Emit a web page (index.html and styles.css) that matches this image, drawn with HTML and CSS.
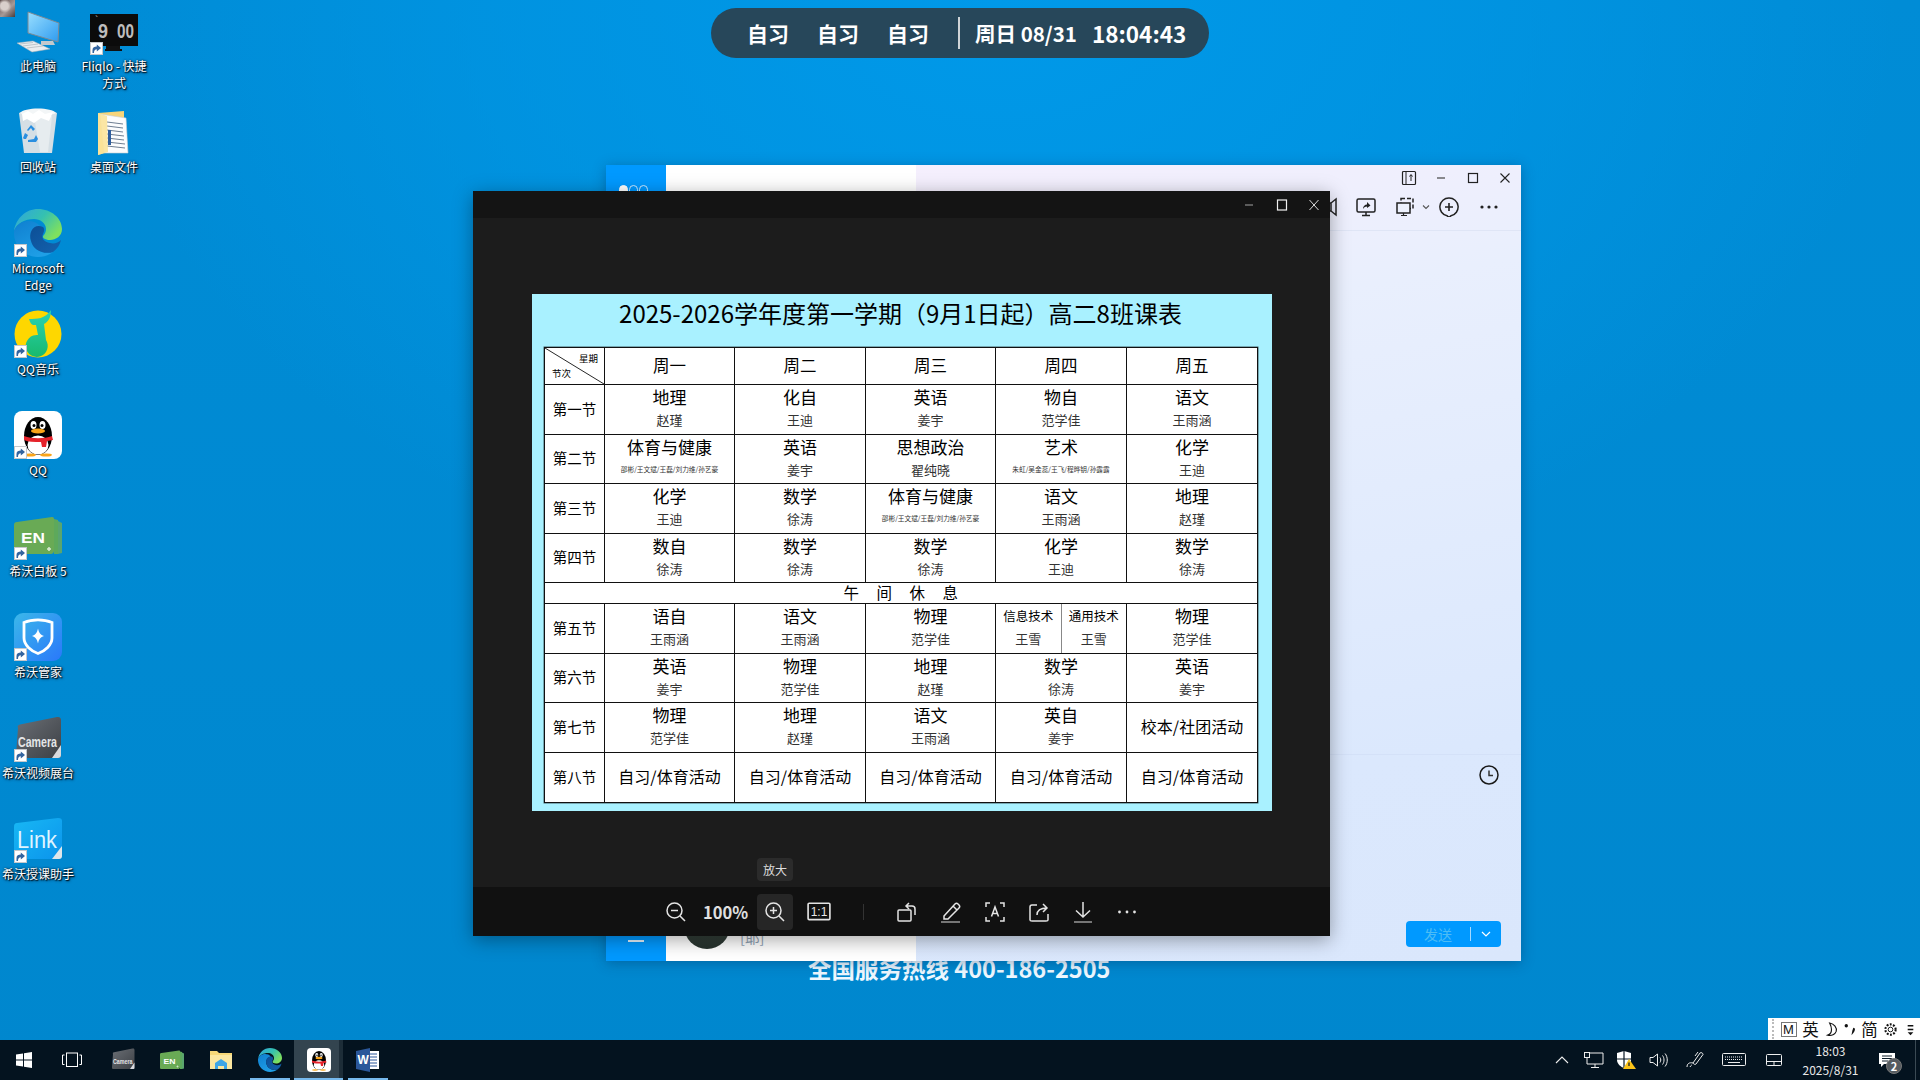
FILE: index.html
```html
<!DOCTYPE html>
<html lang="zh-CN">
<head>
<meta charset="utf-8">
<title>课表</title>
<link rel="stylesheet" href="styles.css">
</head>
<body>
<svg class="sprite" aria-hidden="true">
  <defs>
    <linearGradient id="gEdgeTop" x1="0" y1="0" x2="1" y2="0.6"><stop offset="0" stop-color="#2fa4e0"/><stop offset=".55" stop-color="#35c1b0"/><stop offset="1" stop-color="#7fe05e"/></linearGradient>
    <linearGradient id="gEdgeLow" x1="0" y1="0" x2="0.6" y2="1"><stop offset="0" stop-color="#0f7fd0"/><stop offset="1" stop-color="#1f9fe6"/></linearGradient>
    <linearGradient id="gEdgeWave" x1="0" y1="0" x2="1" y2="1"><stop offset="0" stop-color="#0c4f96"/><stop offset="1" stop-color="#1462ae"/></linearGradient>
    <linearGradient id="gNote" x1="0" y1="0" x2="0" y2="1"><stop offset="0" stop-color="#2ad3b4"/><stop offset="1" stop-color="#18b96e"/></linearGradient>
    <linearGradient id="gShield" x1="0" y1="0" x2="1" y2="1"><stop offset="0" stop-color="#3bb8ea"/><stop offset="1" stop-color="#2a78fa"/></linearGradient>
    <linearGradient id="gCam" x1="0" y1="0" x2="1" y2="1"><stop offset="0" stop-color="#6b6f75"/><stop offset="1" stop-color="#3c4045"/></linearGradient>
    <linearGradient id="gLink" x1="0" y1="0" x2="1" y2="1"><stop offset="0" stop-color="#18b8f4"/><stop offset="1" stop-color="#0b94ec"/></linearGradient>
    <linearGradient id="gScreen" x1="0" y1="0" x2="1" y2="1"><stop offset="0" stop-color="#9adfff"/><stop offset="1" stop-color="#2e9bf0"/></linearGradient>
  </defs>
  <symbol id="sc" viewBox="0 0 13 13"><rect width="13" height="13" fill="#c4c7cb"/><rect x="1" y="1" width="11" height="11" fill="#fff"/><path d="M2.500 11V8C2.500 5.600 4.500 4.600 6.800 4.600V2.500L11 6 6.800 9.500V7.300C5 7.300 4 8.400 4 11Z" fill="#33649f"/></symbol>
  <symbol id="edge" viewBox="0 0 48 48">
    <path d="M0 22C2 9 12 0 24 0c13 0 24 9 24 20 0 7-6 11-12 11-4 0-7-2-7-3 0-2 3-3 3-8 0-6-6-10-12-10C11 10 3 14 0 22Z" fill="url(#gEdgeTop)"/>
    <path d="M0 22C-1 36 10 48 24 48c6 0 11-2 15-5-9 3-20-2-22-11-2-8 3-14 9-15-8-9-23-5-26 5Z" fill="url(#gEdgeLow)"/>
    <path d="M17 32c2 9 13 14 22 11 4-3 7-7 8-12-3 3-7 4-11 3-6-1-9-5-7-9 1-2 2-5 0-7-9-4-15 5-12 14Z" fill="url(#gEdgeWave)"/>
  </symbol>
  <symbol id="qq" viewBox="0 0 48 48">
    <rect width="48" height="48" rx="8" fill="#fff"/>
    <ellipse cx="24" cy="25" rx="14" ry="19" fill="#000"/>
    <ellipse cx="24" cy="34" rx="10.500" ry="9.500" fill="#fff"/>
    <ellipse cx="19.500" cy="14" rx="3" ry="4" fill="#fff"/><ellipse cx="28.500" cy="14" rx="3" ry="4" fill="#fff"/>
    <circle cx="20" cy="14.500" r="1.500" fill="#000"/><circle cx="28" cy="14.500" r="1.500" fill="#000"/>
    <ellipse cx="24" cy="20" rx="7" ry="2.400" fill="#f9a51a"/>
    <path d="M10 25C18 28 30 28 38 25L39 29 33 30 32 36H28L27 31C20 31 14 31 10 29Z" fill="#e5232b"/>
    <ellipse cx="16" cy="44" rx="6" ry="1.600" fill="#f9a51a"/><ellipse cx="32" cy="44" rx="6" ry="1.600" fill="#f9a51a"/>
  </symbol>
  <symbol id="camera" viewBox="0 0 48 48">
    <path d="M4 12C3 10 4 9 6 8.500L43 1c3-.5 4 1 4 3v35c0 2-1 3-3 3H5c-2 0-3-1-3-3Z" fill="url(#gCam)"/>
    <path d="M38 42l9-13v10c0 2-1 3-3 3Z" fill="#d8dade"/>
  </symbol>
  <symbol id="en" viewBox="0 0 48 48">
    <path d="M44 5 48 7V37L44 38Z" fill="#5aa56e"/><path d="M40 3 44 4V38L40 38Z" fill="#5da95b"/>
    <path d="M0 9C0 7 1 6 3 6L38 1C40 1 40 2 40 4V34C40 37 39 38 36 38H3C1 38 0 37 0 35Z" fill="#69aa55"/>
    <path d="M33 33h4M35 31v4" stroke="#d9ecd2" stroke-width="1.500"/>
  </symbol>
</svg>

<div class="desktop">
  <div class="wallpaper-line">全国服务热线 400-186-2505</div>
  <div class="avatar-corner"></div>

  <div class="icons">
    <div class="dicon"><div class="dimg">
      <svg viewBox="0 0 48 48"><path d="M14 5 45 16 44 35 14 26Z" fill="url(#gScreen)" stroke="#7d8a94" stroke-width="1"/><path d="M27 34h12l2 4-14 0Z" fill="#c3c9cd"/><path d="M3 36 19 34 36 42 18 45Z" fill="#e9edf0" stroke="#aab1b6" stroke-width=".5"/><path d="M6 37 19 35.500M9 39 24 37M13 41 29 39" stroke="#b4bbc0" stroke-width=".8"/></svg>
    </div><span class="dlabel">此电脑</span></div>
    <div class="dicon"><div class="dimg">
      <svg viewBox="0 0 48 48"><path d="M5 5C10 2 38 2 43 5L38 45H10Z" fill="#d5dfe5"/><path d="M20 8 38 8 34 44H26Z" fill="#e6ecef"/><path d="M6 5C12 9 36 9 42 5 38 -1 10 -1 6 5Z" fill="#f3f6f7"/><path d="M8 6l6-3 5 3 6-4 6 4 8-2-4 9-8-3-7 5-7-4-4 2Z" fill="#fff"/><path d="M13 22l4-5 4 4-2 2-2-3-3 3ZM9 30l2-5 3 2-2 4h-2ZM20 34h-6v-2l6-1 2-4 2 4-2 3Z" fill="#2a8fe0"/></svg>
    </div><span class="dlabel">回收站</span></div>
    <div class="dicon"><div class="dimg">
      <svg viewBox="0 0 48 48"><use href="#edge"/></svg>
      <svg class="sc"><use href="#sc"/></svg>
    </div><span class="dlabel">Microsoft<br>Edge</span></div>
    <div class="dicon"><div class="dimg">
      <svg viewBox="0 0 48 48"><circle cx="24" cy="24" r="23.500" fill="#fed700"/><path d="M15 9C23 9 31 9 37 0 37 8 34 12 30 14L32 30A11 11 0 1 1 24 25L22 15C18 15 17 15 15 9Z" fill="url(#gNote)"/></svg>
      <svg class="sc"><use href="#sc"/></svg>
    </div><span class="dlabel">QQ音乐</span></div>
    <div class="dicon"><div class="dimg">
      <svg viewBox="0 0 48 48"><use href="#qq"/></svg>
      <svg class="sc"><use href="#sc"/></svg>
    </div><span class="dlabel">QQ</span></div>
    <div class="dicon"><div class="dimg">
      <svg viewBox="0 0 48 48"><use href="#en" y="4"/><text x="7" y="31" class="svg-en" textLength="24" lengthAdjust="spacingAndGlyphs">EN</text></svg>
      <svg class="sc"><use href="#sc"/></svg>
    </div><span class="dlabel">希沃白板 5</span></div>
    <div class="dicon"><div class="dimg">
      <svg viewBox="0 0 48 48"><rect width="48" height="48" rx="9" fill="url(#gShield)"/><path d="M10 9.500C18 6 30 6 38 9.500V25C38 32 31 38 24 40.500 17 38 10 32 10 25Z" fill="none" stroke="#fff" stroke-width="2.800"/><path d="M24 15.500C25 20 26.500 22 30 23 26.500 24 25 26 24 30.500 23 26 21.500 24 18 23 21.500 22 23 20 24 15.500Z" fill="#fff"/></svg>
      <svg class="sc"><use href="#sc"/></svg>
    </div><span class="dlabel">希沃管家</span></div>
    <div class="dicon"><div class="dimg">
      <svg viewBox="0 0 48 48"><use href="#camera" y="2"/><text x="4" y="33" class="svg-cam" textLength="39" lengthAdjust="spacingAndGlyphs">Camera</text></svg>
      <svg class="sc"><use href="#sc"/></svg>
    </div><span class="dlabel">希沃视频展台</span></div>
    <div class="dicon"><div class="dimg">
      <svg viewBox="0 0 48 48"><g transform="translate(0 2)"><path d="M0 10C0 7 1 6 3 6L44 1C47 1 48 2 48 4V36C48 40 47 42 44 42H3C1 42 0 41 0 39Z" fill="url(#gLink)"/><path d="M38 42l10-13v10c0 2-1 3-3 3Z" fill="#dfe6ea"/></g><text x="3" y="33" class="svg-link" textLength="40" lengthAdjust="spacingAndGlyphs">Link</text></svg>
      <svg class="sc"><use href="#sc"/></svg>
    </div><span class="dlabel">希沃授课助手</span></div>
    <div class="dicon"><div class="dimg">
      <svg viewBox="0 0 48 48"><rect y="7" width="48" height="32" fill="#0b0b0b"/><path d="M16 39h14v3H16ZM15 42h17v2H15Z" fill="#111"/><text x="5" y="17" class="svg-tick">`</text><text x="8" y="31" class="svg-flip" textLength="10" lengthAdjust="spacingAndGlyphs">9</text><text x="27" y="31" class="svg-flip" textLength="17" lengthAdjust="spacingAndGlyphs">00</text></svg>
      <svg class="sc"><use href="#sc"/></svg>
    </div><span class="dlabel">Fliqlo - 快捷<br>方式</span></div>
    <div class="dicon"><div class="dimg">
      <svg viewBox="0 0 48 48"><path d="M8 5 34 3 34 39 8 47Z" fill="#f7d57a"/><path d="M10 6 36 10 38 45 14 45Z" fill="#fbfcfd" stroke="#c8ccd0" stroke-width=".6"/><path d="M17 14 33 16M17 18 33 20M17 22 33 24M17 26 34 28M17 30 34 32M17 34 35 36M17 38 35 40" stroke="#6f7f92" stroke-width="1"/><path d="M8 5 17 8 18 44 8 47Z" fill="#fbe39a" opacity=".9"/><rect x="18" y="22" width="3" height="15" fill="#2d5d9e"/></svg>
    </div><span class="dlabel">桌面文件</span></div>
  </div>

  <div class="pill">
    <span class="pill-sub">自习</span><span class="pill-sub">自习</span><span class="pill-sub">自习</span>
    <span class="pill-div"></span>
    <span class="pill-date">周日 08/31</span>
    <span class="pill-time">18:04:43</span>
  </div>

  <section class="qq">
    <aside class="qq-side">
      <div class="qq-dots"><i class="dot-on"></i><i></i><i></i></div>
      <div class="qq-dash"></div>
    </aside>
    <div class="qq-list">
      <div class="qq-contact"><span class="qq-avatar"></span><span class="qq-tag">[耶]</span></div>
    </div>
    <main class="qq-main">
      <div class="qq-head">
        <div class="qq-ctrl">
          <svg class="ic16" viewBox="0 0 16 16"><rect x="1.500" y="1.500" width="13" height="13" rx="1" fill="none" stroke="#222" stroke-width="1.200"/><path d="M5 1.500V14.500" stroke="#222"/><path d="M10 11V5M8.500 6.500 10 4.500 11.500 6.500" fill="none" stroke="#222"/></svg>
          <svg class="ic16" viewBox="0 0 16 16"><path d="M4 8h8" stroke="#444" stroke-width="1.200"/></svg>
          <svg class="ic16" viewBox="0 0 16 16"><rect x="3.500" y="3.500" width="9" height="9" fill="none" stroke="#222" stroke-width="1.200"/></svg>
          <svg class="ic16" viewBox="0 0 16 16"><path d="M3.500 3.500 12.500 12.500M12.500 3.500 3.500 12.500" stroke="#222" stroke-width="1.100"/></svg>
        </div>
        <div class="qq-tools">
          <svg class="ic20 tool-cam" viewBox="0 0 20 20"><path d="M16 2 11 6V14L16 18ZM11 6H0M11 14H0" fill="none" stroke="#222" stroke-width="1.500"/></svg>
          <svg class="ic20" viewBox="0 0 20 20"><rect x="1" y="2" width="18" height="13" rx="1.500" fill="none" stroke="#222" stroke-width="1.500"/><path d="M10 15v3M6 18.500h8" stroke="#222" stroke-width="1.500"/><path d="M7 12c0-3 2-4.500 4-4.500V5l3.500 3.500L11 11V9.500c-1.500 0-3 .8-4 2.500Z" fill="#222"/></svg>
          <svg class="ic20 tool-remote" viewBox="0 0 20 20"><rect x="6" y="1.500" width="12" height="10" fill="none" stroke="#222" stroke-width="1.500" stroke-dasharray="4 2"/><rect x="2" y="6" width="13" height="10" fill="#edf1fd" stroke="#222" stroke-width="1.500"/><path d="M8.500 16v2M6 18.500h6" stroke="#222" stroke-width="1.200"/></svg>
          <svg class="tool-chev" viewBox="0 0 8 8"><path d="M1 2.500 4 5.500 7 2.500" fill="none" stroke="#555" stroke-width="1.100"/></svg>
          <svg class="ic20 tool-add" viewBox="0 0 20 20"><path d="M10 1a9 9 0 0 1 2 17.800L10 20.500 8 18.800A9 9 0 0 1 10 1Z" fill="none" stroke="#222" stroke-width="1.500"/><path d="M10 6v8M6 10h8" stroke="#222" stroke-width="1.600"/></svg>
          <svg class="ic20 tool-more" viewBox="0 0 20 20"><circle cx="3" cy="10" r="1.600" fill="#222"/><circle cx="10" cy="10" r="1.600" fill="#222"/><circle cx="17" cy="10" r="1.600" fill="#222"/></svg>
        </div>
      </div>
      <div class="qq-chat"></div>
      <div class="qq-input">
        <svg class="qq-clock" viewBox="0 0 20 20"><circle cx="10" cy="10" r="9" fill="none" stroke="#1a1a1a" stroke-width="1.500"/><path d="M10 5.500V10.500H14" fill="none" stroke="#333" stroke-width="1.500"/></svg>
        <div class="qq-send"><span class="send-txt">发送</span><span class="send-div"></span><svg class="send-chev" viewBox="0 0 10 10"><path d="M1 3 5 7 9 3" fill="none" stroke="#fff" stroke-width="1.200"/></svg></div>
      </div>
    </main>
  </section>

  <section class="viewer">
    <header class="v-title">
      <svg class="ic16" viewBox="0 0 16 16"><path d="M4 8h8" stroke="#8a8a8a" stroke-width="1.200"/></svg>
      <svg class="ic16" viewBox="0 0 16 16"><rect x="3.500" y="3" width="9" height="10" fill="none" stroke="#f0f0f0" stroke-width="1.200"/></svg>
      <svg class="ic16" viewBox="0 0 16 16"><path d="M3.500 3 12.500 13M12.500 3 3.500 13" stroke="#ddd" stroke-width="1"/></svg>
    </header>
    <div class="v-body">
      <article class="sheet">
        <h1 class="sheet-title">2025-2026学年度第一学期（9月1日起）高二8班课表</h1>
        <table class="tt">
          <colgroup><col class="c0"><col class="c1"><col class="c2"><col class="c1"><col class="c2"><col class="c2"></colgroup>
          <tbody>
          <tr class="r-head">
            <td class="corner"><svg class="corner-line" viewBox="0 0 60 37" preserveAspectRatio="none"><path d="M0 0 60 37" stroke="#222" stroke-width="1"/></svg><span class="corner-a">星期</span><span class="corner-b">节次</span></td>
            <td class="day">周一</td><td class="day">周二</td><td class="day">周三</td><td class="day">周四</td><td class="day">周五</td>
          </tr>
          <tr class="r50">
            <th>第一节</th>
            <td><b>地理</b><i>赵瑾</i></td><td><b>化自</b><i>王迪</i></td><td><b>英语</b><i>姜宇</i></td><td><b>物自</b><i>范学佳</i></td><td><b>语文</b><i>王雨涵</i></td>
          </tr>
          <tr class="r49">
            <th>第二节</th>
            <td><b>体育与健康</b><i class="xs">邵彬/王文斌/王磊/刘力维/孙艺豪</i></td><td><b>英语</b><i>姜宇</i></td><td><b>思想政治</b><i>翟纯晓</i></td><td><b>艺术</b><i class="xs">朱虹/吴金蕊/王飞/程晔钥/孙露露</i></td><td><b>化学</b><i>王迪</i></td>
          </tr>
          <tr class="r50">
            <th>第三节</th>
            <td><b>化学</b><i>王迪</i></td><td><b>数学</b><i>徐涛</i></td><td><b>体育与健康</b><i class="xs">邵彬/王文斌/王磊/刘力维/孙艺豪</i></td><td><b>语文</b><i>王雨涵</i></td><td><b>地理</b><i>赵瑾</i></td>
          </tr>
          <tr class="r49">
            <th>第四节</th>
            <td><b>数自</b><i>徐涛</i></td><td><b>数学</b><i>徐涛</i></td><td><b>数学</b><i>徐涛</i></td><td><b>化学</b><i>王迪</i></td><td><b>数学</b><i>徐涛</i></td>
          </tr>
          <tr class="r-lunch"><td colspan="6" class="lunch">午间休息</td></tr>
          <tr class="r50">
            <th>第五节</th>
            <td><b>语自</b><i>王雨涵</i></td><td><b>语文</b><i>王雨涵</i></td><td><b>物理</b><i>范学佳</i></td>
            <td class="split"><div class="split-row"><div class="split-cell"><b>信息技术</b><i>王雪</i></div><div class="split-cell"><b>通用技术</b><i>王雪</i></div></div></td>
            <td><b>物理</b><i>范学佳</i></td>
          </tr>
          <tr class="r49">
            <th>第六节</th>
            <td><b>英语</b><i>姜宇</i></td><td><b>物理</b><i>范学佳</i></td><td><b>地理</b><i>赵瑾</i></td><td><b>数学</b><i>徐涛</i></td><td><b>英语</b><i>姜宇</i></td>
          </tr>
          <tr class="r50">
            <th>第七节</th>
            <td><b>物理</b><i>范学佳</i></td><td><b>地理</b><i>赵瑾</i></td><td><b>语文</b><i>王雨涵</i></td><td><b>英自</b><i>姜宇</i></td><td class="one">校本/社团活动</td>
          </tr>
          <tr class="r50">
            <th>第八节</th>
            <td class="one">自习/体育活动</td><td class="one">自习/体育活动</td><td class="one">自习/体育活动</td><td class="one">自习/体育活动</td><td class="one">自习/体育活动</td>
          </tr>
          </tbody>
        </table>
      </article>
    </div>
    <div class="v-tip">放大</div>
    <footer class="v-bar">
      <span class="vb"><svg viewBox="0 0 22 22"><circle cx="9.500" cy="9.500" r="7.500"/><path d="M6 9.500h7M15 15l5 5"/></svg></span>
      <span class="vb-pct">100%</span>
      <span class="vb vb-on"><svg viewBox="0 0 22 22"><circle cx="9.500" cy="9.500" r="7.500"/><path d="M6 9.500h7M9.500 6v7M15 15l5 5"/></svg></span>
      <span class="vb vb-ratio"><svg viewBox="0 0 22 18"><rect x="1" y="1" width="20" height="15" rx="1"/><text x="11" y="12.500" class="svg-ratio">1:1</text></svg></span>
      <span class="vb-sep"></span>
      <span class="vb-group">
        <span class="vb"><svg viewBox="0 0 22 22"><rect x="2" y="9" width="13" height="11" rx="1"/><path d="M10 5h6c2 0 3 1 3 3v6M13 2 10 5 13 8"/></svg></span>
        <span class="vb"><svg viewBox="0 0 22 22"><path d="M4 15 15 3c1-1 2-1 3 0l1 1c1 1 1 2 0 3L8 18H4ZM13 5l4 4"/><path class="dim" d="M1 21h19"/></svg></span>
        <span class="vb"><svg viewBox="0 0 22 22"><path d="M2 6V2h4M16 2h4v4M20 16v4h-4M6 20H2v-4"/><path d="M7.500 15.500 11 6l3.500 9.500M8.800 12.500h4.400"/></svg></span>
        <span class="vb"><svg viewBox="0 0 22 22"><path d="M9 4H4c-1 0-2 1-2 2v13c0 1 1 1 2 1h14c1 0 2 0 2-1v-6"/><path d="M9 14c0-5 3-7 10-7M15 3l4 4-4 4"/></svg></span>
        <span class="vb"><svg viewBox="0 0 22 22"><path d="M11 1v15M4 9.500 11 16l7-6.500"/><path class="dim" d="M2 21h18"/></svg></span>
        <span class="vb"><svg viewBox="0 0 22 22"><circle cx="3.500" cy="11" r="1.400" class="solid"/><circle cx="11" cy="11" r="1.400" class="solid"/><circle cx="18.500" cy="11" r="1.400" class="solid"/></svg></span>
      </span>
    </footer>
  </section>

  <div class="ime">
    <span class="ime-handle"></span>
    <span class="ime-m">M</span>
    <span class="ime-ch">英</span>
    <svg class="ime-ic" viewBox="0 0 16 16"><path d="M6 1c5 1 8 5 7 9-1 3-5 5-9 4 3-1 4-3 4-6S7 3 6 1Z" fill="none" stroke="#111" stroke-width="1.200"/></svg>
    <svg class="ime-ic" viewBox="0 0 16 16"><circle cx="3.500" cy="4" r="1.800" fill="#111"/><path d="M11 6c3 0 2 4-2 8l1-5Z" fill="#111"/></svg>
    <span class="ime-ch">简</span>
    <svg class="ime-ic" viewBox="0 0 16 16"><circle cx="8" cy="8" r="2.500" fill="none" stroke="#111"/><circle cx="8" cy="8" r="5.500" fill="none" stroke="#111" stroke-width="2.200" stroke-dasharray="2 1.500"/></svg>
    <svg class="ime-ic" viewBox="0 0 16 16"><path d="M5 4h6M5 8h6" stroke="#111" stroke-width="1.400"/><path d="M5 11h6l-3 3Z" fill="#111"/></svg>
  </div>

  <nav class="taskbar">
    <span class="ti ti-w"><svg class="ic16" viewBox="0 0 16 16"><path d="M0 2.500 7 1.500V7.500H0ZM8 1.300 16 0V7.500H8ZM0 8.500H7V14.500L0 13.500ZM8 8.500H16V16L8 14.700Z" fill="#fff"/></svg></span>
    <span class="ti ti-w"><svg class="ic20" viewBox="0 0 20 16"><rect x="4.500" y="1" width="11" height="13.500" fill="none" stroke="#fff" stroke-width="1"/><path d="M2.500 3H.5V12.500H2.500M17.500 3H19.500V12.500H17.500" fill="none" stroke="#fff"/></svg></span>
    <span class="ti ti-first"><svg class="ic24" viewBox="0 0 48 48"><use href="#camera"/><text x="4" y="31" class="svg-cam" textLength="39" lengthAdjust="spacingAndGlyphs">Camera</text></svg></span>
    <span class="ti"><svg class="ic24" viewBox="0 0 48 48"><use href="#en" y="4"/><text x="7" y="31" class="svg-en" textLength="24" lengthAdjust="spacingAndGlyphs">EN</text></svg></span>
    <span class="ti ti-run"><svg class="ic24" viewBox="0 0 24 20"><path d="M1 1h7l2 2h13v16H1Z" fill="#f6d878"/><path d="M1 5h22v14H1Z" fill="#fbe7a0"/><path d="M6 19v-6l6-4 6 4v6h-3v-3H9v3Z" fill="#3fa6e6"/></svg></span>
    <span class="ti ti-run ti-part"><svg class="ic24" viewBox="0 0 48 48"><use href="#edge"/></svg></span>
    <span class="ti ti-active"><svg class="ic24" viewBox="0 0 48 48"><use href="#qq"/></svg></span>
    <span class="ti ti-run"><svg class="ic24" viewBox="0 0 24 24"><rect x="7" y="3" width="16" height="18" fill="#fff"/><path d="M14 6h7M14 9h7M14 12h7M14 15h7M14 18h7" stroke="#2b579a"/><path d="M0 3 14 0V24L0 21Z" fill="#2b579a"/><text x="1.500" y="16" class="svg-word">W</text></svg></span>

    <div class="tray">
      <span class="tr tr-32"><svg class="ic16" viewBox="0 0 16 16"><path d="M2 11 8 5 14 11" fill="none" stroke="#eee" stroke-width="1.100"/></svg></span>
      <span class="tr tr-32"><svg class="ic20" viewBox="0 0 20 16"><path d="M5 1H19V12H3V5M11 12V15M7 15.500H15" fill="none" stroke="#eee"/><rect x="0.500" y="0.500" width="5" height="5" fill="#0a1a26" stroke="#eee"/></svg></span>
      <span class="tr tr-32"><svg class="ic20" viewBox="0 0 20 18"><path d="M1 2 8 0 15 2V9C15 13 11 16 8 17 5 16 1 13 1 9Z" fill="#fff"/><path d="M8 0V17M1 8H15" stroke="#0a1a26" stroke-width="1.200"/><path d="M13 8 20 18H7Z" fill="#fcc419"/><path d="M13 11.500V15" stroke="#222" stroke-width="1.300"/></svg></span>
      <span class="tr tr-34"><svg class="ic20" viewBox="0 0 20 16"><path d="M1 5.500H4L8.500 2V14L4 10.500H1Z" fill="none" stroke="#eee"/><path d="M11 5.500C12 7 12 9 11 10.500M13.500 3.500C15.500 6 15.500 10 13.500 12.500M16 1.500C19 5 19 11 16 14.500" fill="none" stroke="#eee"/></svg></span>
      <span class="tr tr-37"><svg class="ic20" viewBox="0 0 20 18"><path d="M8 12 15 2C16 1 18 2 18 3.500L11 13C10 14 8.500 13 8 12ZM13 1 10 5" fill="none" stroke="#eee"/><path d="M8 12C4 11 2 13 2 16M5 16C6 14 7 14 7 14" fill="none" stroke="#eee"/></svg></span>
      <span class="tr tr-41"><svg class="ic24" viewBox="0 0 24 16"><rect x=".5" y="1.500" width="23" height="12" rx="1" fill="none" stroke="#eee"/><path d="M3 5h18M3 7.500h18" stroke="#eee" stroke-dasharray="1 1"/><path d="M6 10.500h12" stroke="#eee"/></svg></span>
      <span class="tr tr-40"><svg class="ic16" viewBox="0 0 16 14"><rect x=".5" y="1.500" width="15" height="11" rx="1" fill="none" stroke="#eee"/><path d="M.5 8.500h15M8 8.500v4" stroke="#eee"/></svg></span>
      <span class="clock"><span>18:03</span><span>2025/8/31</span></span>
      <span class="notif">
        <svg class="ic16" viewBox="0 0 16 14"><path d="M0 0H16V11H5L2 14V11H0Z" fill="#fff"/><path d="M3 3h10M3 5.500h10M3 8h6" stroke="#0a1a26"/></svg>
        <span class="badge">2</span>
      </span>
      <span class="show-desk"></span>
    </div>
  </nav>
</div>
</body>
</html>
```

FILE: styles.css
```css
* { box-sizing: border-box; }
html, body { margin: 0; padding: 0; width: 1920px; height: 1080px; overflow: hidden; }
body { font-family: "Noto Sans CJK SC", "Noto Sans", sans-serif; color: #fff; }
.sprite { position: absolute; width: 0; height: 0; }
.svg-cam { font: bold 15px "Liberation Sans", sans-serif; fill: #e4e6e8; }
.svg-en { font: bold 15px "Liberation Sans", sans-serif; fill: #fff; }
.svg-link { font: 23px "Liberation Sans", sans-serif; fill: #dff4ff; }
.svg-flip { font: bold 21px "Liberation Sans", sans-serif; fill: #bdbdbd; }
.svg-tick { font: 10px "Liberation Sans", sans-serif; fill: #bdbdbd; }
.svg-word { font: bold 12px "Liberation Sans", sans-serif; fill: #fff; }
.svg-ratio { font: 11px "Liberation Sans", sans-serif; fill: #e6e6e6; stroke: none; text-anchor: middle; }
.ic16 { width: 16px; height: 16px; display: block; }
.ic20 { width: 20px; height: 20px; display: block; }
.ic24 { width: 24px; height: 24px; display: block; overflow: visible; }

.desktop {
  position: relative; width: 1920px; height: 1080px; overflow: hidden;
  background:
    radial-gradient(ellipse 900px 620px at 52% 0%, #0099e9 0%, rgba(0,153,233,.55) 55%, rgba(0,153,233,0) 100%),
    linear-gradient(180deg, #008cd6 0%, #0087ce 100%);
}
.wallpaper-line {
  position: absolute; left: 808px; top: 951px; font-size: 23.500px; font-weight: 700; line-height: 34px; white-space: nowrap; color: #eef8ff;
}
.avatar-corner {
  position: absolute; left: 0; top: 0; width: 15px; height: 17px;
  background:
    radial-gradient(circle at 30% 35%, #d9cfcb 0 25%, rgba(217,207,203,0) 45%),
    linear-gradient(135deg, #5d4a48, #a79a97 55%, #4a3c3a);
}

/* desktop icons */
.icons {
  display: grid; grid-auto-flow: column;
  grid-template-rows: repeat(9, 101px); grid-template-columns: repeat(2, 76px);
  padding-top: 7px; width: 152px;
}
.dicon { display: flex; flex-direction: column; align-items: center; }
.dimg { position: relative; width: 48px; height: 48px; flex: none; }
.dimg svg { display: block; width: 48px; height: 48px; overflow: visible; }
.dimg .sc { position: absolute; left: 0; bottom: 0; width: 13px; height: 13px; }
.dlabel {
  margin-top: 2px; width: 76px; text-align: center; font-size: 12px; line-height: 17px; color: #fff;
  text-shadow: 1px 1px 1px #00101c, 1px 1px 3px #001a2e, 0 0 2px #00263f;
  white-space: nowrap;
}

/* top pill */
.pill {
  position: absolute; left: 711px; top: 8px; width: 498px; height: 50px; border-radius: 25px;
  background: #27475a; display: flex; align-items: center; padding-left: 36px; font-weight: 700;
}
.pill-sub { font-size: 21px; line-height: 30px; width: 42px; margin-right: 28px; white-space: nowrap; }
.pill-div { width: 2px; height: 32px; background: #cfd4d7; margin-left: 1px; }
.pill-date { font-size: 20.500px; margin-left: 15px; white-space: nowrap; }
.pill-time { font-size: 22.500px; margin-left: 15px; white-space: nowrap; }

/* QQ window behind viewer */
.qq {
  position: absolute; left: 606px; top: 165px; width: 915px; height: 796px; display: flex;
  box-shadow: 0 2px 12px rgba(0,40,80,.35);
  color: #222;
}
.qq-side { width: 60px; background: #0099ff; position: relative; flex: none; }
.qq-dots { display: flex; gap: 1px; padding: 20px 0 0 13px; }
.qq-dots i { width: 9px; height: 12px; border: 1px solid #cfe9ff; border-radius: 5px; }
.qq-dots .dot-on { background: #fff; border-color: #fff; }
.qq-dash { position: absolute; left: 22px; top: 775px; width: 16px; height: 1.500px; background: #e8f5ff; }
.qq-list { width: 250px; background: #fff; flex: none; display: flex; flex-direction: column; justify-content: flex-end; }
.qq-contact { display: flex; align-items: flex-start; padding: 0 0 9px 18px; height: 58px; }
.qq-avatar { width: 46px; height: 46px; border-radius: 50%; background: linear-gradient(180deg, #55625a, #25302b); flex: none; }
.qq-tag { margin: 25px 0 0 10px; font-size: 14.500px; line-height: 18px; color: #8fa2b3; }
.qq-main {
  flex: 1; display: flex; flex-direction: column;
  background: linear-gradient(170deg, #f5effd 0%, #e9effd 22%, #dbe8fd 75%, #dae7fc 100%);
}
.qq-head { height: 66px; border-bottom: 1px solid #dfe5f6; flex: none; position: relative; }
.qq-ctrl { display: flex; justify-content: flex-end; gap: 16px; padding: 5px 8px 0 0; }
.qq-tools { display: flex; align-items: center; justify-content: flex-end; padding-right: 22px; margin-top: 11px; height: 20px; }
.tool-cam { margin-right: 16px; overflow: visible; }
.tool-remote { margin-left: 19px; }
.tool-chev { width: 8px; height: 8px; margin-left: 7px; display: block; }
.tool-add { margin-left: 9px; }
.tool-more { margin-left: 20px; }
.qq-chat { height: 524px; flex: none; border-bottom: 1px solid #d4e1f8; }
.qq-input { flex: 1; position: relative; }
.qq-clock { position: absolute; right: 22px; top: 10px; width: 20px; height: 20px; }
.qq-send {
  position: absolute; right: 20px; bottom: 14px; width: 95px; height: 26px; border-radius: 4px;
  background: #0099ff; display: flex; align-items: center;
}
.send-txt { width: 64px; padding-left: 18px; font-size: 14px; color: #4dbcf5; white-space: nowrap; }
.send-div { width: 1px; height: 14px; background: #a5d9ff; }
.send-chev { width: 10px; height: 10px; margin-left: 10px; }

/* image viewer */
.viewer {
  position: absolute; left: 473px; top: 191px; width: 857px; height: 745px; display: flex; flex-direction: column;
  background: #1c1c1c; box-shadow: 0 4px 18px rgba(0,0,0,.35); color: #ddd;
}
.v-title { height: 27px; background: #141414; flex: none; display: flex; justify-content: flex-end; align-items: center; gap: 16.300px; padding-right: 8px; }
.v-body { flex: 1; display: flex; align-items: center; justify-content: center; }
.sheet { width: 740px; height: 517px; background: #a9f1ff; padding: 0 15px 0 12px; color: #000; margin-left: 1px; }
.sheet-title { margin: 0; height: 53px; line-height: 38px; font-size: 24px; font-weight: 400; text-align: center; white-space: nowrap; }
.tt { border-collapse: collapse; table-layout: fixed; width: 713px; background: #fff; box-shadow: 0 0 0 .5px rgba(0,0,0,.6); }
.c0 { width: 60px; } .c1 { width: 130px; } .c2 { width: 131px; }
.tt td, .tt th { border: 1px solid #111; padding: 0; text-align: center; font-weight: 400; overflow: hidden; }
.tt td { vertical-align: top; }
.tt th { font-size: 14.500px; line-height: 20px; vertical-align: middle; font-weight: 400; padding-bottom: 2px; }
.tt b { display: block; font-weight: 400; font-size: 17px; line-height: 23px; white-space: nowrap; }
.tt i { display: block; font-style: normal; font-weight: 400; font-size: 13px; line-height: 23px; color: #333; white-space: nowrap; }
.tt i.xs { font-size: 6.700px; color: #333; }
.r-head { height: 37px; } .r50 { height: 50px; } .r49 { height: 49px; } .r-lunch { height: 21px; }
.tt .day { vertical-align: middle; font-size: 16.500px; line-height: 22px; padding: 0 0 2px; }
.tt .corner { position: relative; padding: 0; }
.corner-line { position: absolute; left: 0; top: 0; width: 100%; height: 100%; display: block; }
.corner-a, .corner-b { position: absolute; font-size: 9.500px; line-height: 12px; white-space: nowrap; }
.corner-a { right: 6px; top: 4px; }
.corner-b { left: 7px; bottom: 5px; }
.tt .lunch { vertical-align: middle; padding: 0 0 2px 17px; font-size: 15.500px; line-height: 18px; letter-spacing: 17.500px; }
.tt .one { vertical-align: middle; padding: 0 0 3px; font-size: 16px; line-height: 22px; white-space: nowrap; }
.tt .split { padding: 0; vertical-align: top; }
.split-row { display: flex; height: 49px; }
.split-cell { flex: 1 1 0; }
.split-cell + .split-cell { border-left: 1px solid #888; }
.tt .split b { font-size: 12.500px; }

.v-tip {
  position: absolute; left: 284px; top: 667px; width: 36px; height: 23px; border-radius: 4px;
  background: #2b2b2b; font-size: 12px; line-height: 23px; text-align: center; color: #ddd;
}
.v-bar { height: 49px; background: #111; flex: none; display: flex; align-items: center; padding-left: 185px; }
.vb { width: 36px; height: 36px; display: flex; align-items: center; justify-content: center; border-radius: 4px; flex: none; }
.vb svg { width: 22px; height: 22px; display: block; fill: none; stroke: #e4e4e4; stroke-width: 1.500; }
.vb .dim { stroke: #999; }
.vb .solid { fill: #e4e4e4; stroke: none; }
.vb-on { background: #262626; }
.vb-pct { width: 63px; text-align: center; font-size: 16.500px; font-weight: 700; color: #e0e0e0; }
.vb-ratio { margin-left: 8px; }
.vb-ratio svg { width: 24px; height: 20px; }
.vb-sep { width: 1px; height: 16px; background: #333; margin: 0 25px 0 26px; flex: none; }
.vb-group { display: flex; gap: 8px; }

/* IME */
.ime {
  position: absolute; right: 0; bottom: 40px; width: 152px; height: 22px; background: #fff; color: #111;
  display: grid; grid-template-columns: 10px 21px 23px 19px 18px 21px 21px 19px; align-items: center; justify-items: center;
}
.ime-handle { width: 2px; height: 20px; border-left: 2px dotted #bbb; justify-self: start; margin-left: 4px; }
.ime-m { width: 16px; height: 15px; border: 1px solid #777; font: 13px/13px "Liberation Sans", sans-serif; text-align: center; }
.ime-ch { font-size: 16.500px; line-height: 22px; }
.ime-ic { width: 15px; height: 15px; display: block; }

/* taskbar */
.taskbar {
  position: absolute; left: 0; bottom: 0; width: 1920px; height: 40px; background: #04131f; display: flex; align-items: center;
}
.ti { position: relative; width: 49px; height: 40px; display: flex; align-items: center; justify-content: center; flex: none; }
.ti-w { width: 48px; }
.ti-first { margin-left: 2px; }
.ti-run::after { content: ""; position: absolute; left: 5px; right: 4px; bottom: 0; height: 2px; background: #76b9ed; }
.ti:nth-child(5)::after { display: none; }
.ti-active { background: #33444f; }
.ti-active::before { content: ""; position: absolute; right: 0; top: 0; bottom: 0; width: 4px; background: #1d2d38; }
.ti-active::after { content: ""; position: absolute; left: 0; right: 0; bottom: 0; height: 2px; background: #76b9ed; }
.tray { margin-left: auto; display: flex; align-items: center; height: 40px; }
.tr { height: 40px; display: flex; align-items: center; justify-content: center; flex: none; }
.tr-32 { width: 32px; } .tr-34 { width: 34px; } .tr-37 { width: 37px; } .tr-41 { width: 41px; } .tr-40 { width: 40px; }
.clock { width: 73px; display: flex; flex-direction: column; align-items: center; font-size: 12px; line-height: 19px; color: #e8e8e8; white-space: nowrap; }
.notif { position: relative; width: 48px; height: 40px; display: flex; align-items: center; padding-left: 12px; }
.badge {
  position: absolute; left: 19px; top: 18px; width: 16px; height: 16px; border-radius: 50%; background: #555b60; border: 1px solid #777;
  font-size: 11px; font-weight: 700; line-height: 14px; text-align: center; color: #fff;
}
.show-desk { width: 5px; height: 40px; border-left: 1px solid #3b4a54; }
```
